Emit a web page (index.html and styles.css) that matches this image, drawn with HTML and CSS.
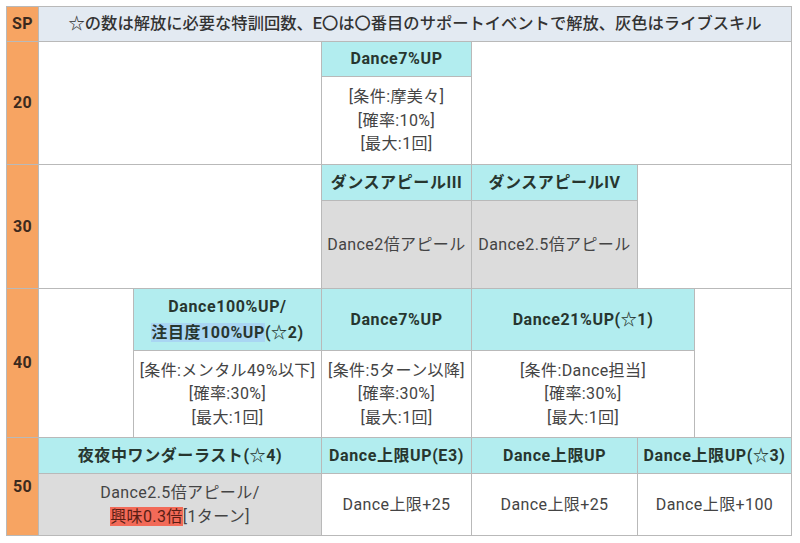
FILE: index.html
```html
<!DOCTYPE html>
<html lang="ja">
<head>
<meta charset="utf-8">
<link rel="stylesheet" href="styles.css">
</head>
<body>
<table class="skill">
  <colgroup>
    <col class="c-sp"><col class="c1"><col class="c2"><col class="c3"><col class="c4"><col class="c5"><col class="c6">
  </colgroup>
  <tr class="h0">
    <td class="sp">SP</td>
    <td class="note" colspan="6">☆の数は解放に必要な特訓回数、E〇は〇番目のサポートイベントで解放、灰色はライブスキル</td>
  </tr>
  <tr class="r20a">
    <td class="sp" rowspan="2">20</td>
    <td colspan="2" rowspan="2"></td>
    <td class="head">Dance7%UP</td>
    <td colspan="3" rowspan="2"></td>
  </tr>
  <tr class="r20b">
    <td class="body">[条件:摩美々]<br>[確率:10%]<br>[最大:1回]</td>
  </tr>
  <tr class="r30a">
    <td class="sp" rowspan="2">30</td>
    <td colspan="2" rowspan="2"></td>
    <td class="head">ダンスアピールIII</td>
    <td class="head">ダンスアピールIV</td>
    <td colspan="2" rowspan="2"></td>
  </tr>
  <tr class="r30b">
    <td class="body live">Dance2倍アピール</td>
    <td class="body live">Dance2.5倍アピール</td>
  </tr>
  <tr class="r40a">
    <td class="sp" rowspan="2">40</td>
    <td rowspan="2"></td>
    <td class="head">Dance100%UP/<br><span class="hl-blue">注目度100%UP</span>(☆2)</td>
    <td class="head">Dance7%UP</td>
    <td class="head" colspan="2">Dance21%UP(☆1)</td>
    <td rowspan="2"></td>
  </tr>
  <tr class="r40b">
    <td class="body">[条件:メンタル49%以下]<br>[確率:30%]<br>[最大:1回]</td>
    <td class="body">[条件:5ターン以降]<br>[確率:30%]<br>[最大:1回]</td>
    <td class="body" colspan="2">[条件:Dance担当]<br>[確率:30%]<br>[最大:1回]</td>
  </tr>
  <tr class="r50a">
    <td class="sp" rowspan="2">50</td>
    <td class="head" colspan="2">夜夜中ワンダーラスト(☆4)</td>
    <td class="head">Dance上限UP(E3)</td>
    <td class="head">Dance上限UP</td>
    <td class="head" colspan="2">Dance上限UP(☆3)</td>
  </tr>
  <tr class="r50b">
    <td class="body live" colspan="2">Dance2.5倍アピール/<br><span class="hl-red">興味0.3倍</span>[1ターン]</td>
    <td class="body">Dance上限+25</td>
    <td class="body">Dance上限+25</td>
    <td class="body" colspan="2">Dance上限+100</td>
  </tr>
</table>
</body>
</html>
```

FILE: styles.css
```css
html, body {
  margin: 0;
  padding: 0;
  background: #ffffff;
}
body {
  padding: 6px 0 0 6px;
  font-family: Roboto, "Noto Sans CJK JP", sans-serif;
  color: #3a3a3a;
}
.skill {
  border-collapse: collapse;
  table-layout: fixed;
  width: 785px;
}
.c-sp { width: 32px; }
.c1 { width: 95px; }
.c2 { width: 188px; }
.c3 { width: 150px; }
.c4 { width: 166px; }
.c5 { width: 57px; }
.c6 { width: 97px; }
.skill td {
  border: 1px solid #b9b9b9;
  padding: 0;
  text-align: center;
  vertical-align: middle;
  font-size: 16px;
  letter-spacing: 0.4px;
  line-height: 23.5px;
  white-space: nowrap;
  overflow: hidden;
}
.skill td.sp {
  background: #f7a462;
  color: #3b2a1e;
  font-weight: 700;
  font-size: 16px;
  letter-spacing: 0.3px;
}
.skill td.note {
  background: #e3eaf2;
  color: #333333;
  font-weight: 500;
  font-size: 16.3px;
  letter-spacing: 0;
}
.skill td.head {
  background: #b2edef;
  color: #27362f;
  font-weight: 700;
  font-size: 16px;
  letter-spacing: 0.6px;
  line-height: 26px;
}
.skill td.body {
  color: #444444;
}
.skill td.live {
  background: #dcdcdc;
}
.hl-blue {
  background: #a9d6f3;
}
.hl-red {
  background: #f26a58;
  color: #5a1e14;
}
.h0 td { height: 34px; }
.r20a td { height: 34px; }
.r20b td { height: 87px; }
.r30a td { height: 35px; }
.r30b td { height: 87px; }
.r40a td { height: 61px; }
.r40b td { height: 86px; }
.r50a td { height: 35px; }
.r50b td { height: 61px; }
```
